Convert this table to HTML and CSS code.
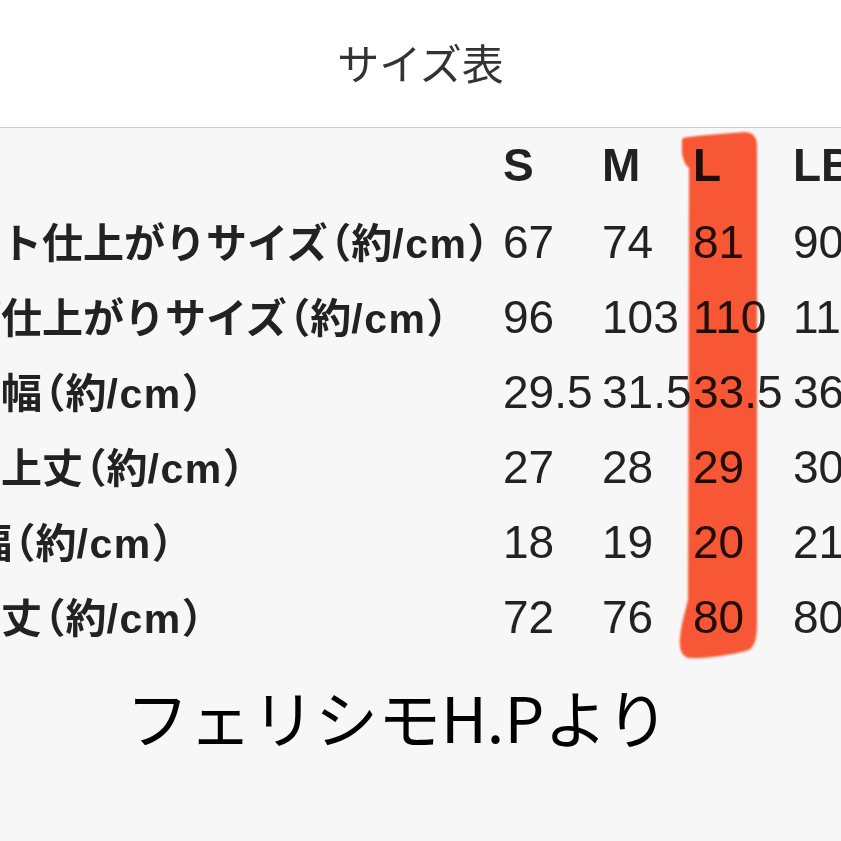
FILE: index.html
```html
<!DOCTYPE html>
<html lang="ja">
<head>
<meta charset="utf-8">
<title>サイズ表</title>
<link rel="stylesheet" href="styles.css">
</head>
<body>
<div class="page">
  <header class="top">
    <h1 class="title">サイズ表</h1>
  </header>
  <main class="sheet">
    <div class="size-table">
      <div class="cell head label"></div>
      <div class="cell head">S</div>
      <div class="cell head">M</div>
      <div class="cell head">L</div>
      <div class="cell head">LB</div>
      <div class="cell head">LL</div>

      <div class="cell label">ウエスト仕上がりサイズ<span class="po">（</span>約<span class="unit">/cm</span><span class="pc">）</span></div>
      <div class="cell">67</div><div class="cell">74</div><div class="cell">81</div><div class="cell">90</div><div class="cell">90</div>

      <div class="cell label">ヒップ仕上がりサイズ<span class="po">（</span>約<span class="unit">/cm</span><span class="pc">）</span></div>
      <div class="cell">96</div><div class="cell">103</div><div class="cell">110</div><div class="cell">119</div><div class="cell">119</div>

      <div class="cell label">わたり幅<span class="po">（</span>約<span class="unit">/cm</span><span class="pc">）</span></div>
      <div class="cell">29.5</div><div class="cell">31.5</div><div class="cell">33.5</div><div class="cell">36.5</div><div class="cell">36.5</div>

      <div class="cell label">後ろ股上丈<span class="po">（</span>約<span class="unit">/cm</span><span class="pc">）</span></div>
      <div class="cell">27</div><div class="cell">28</div><div class="cell">29</div><div class="cell">30</div><div class="cell">30</div>

      <div class="cell label"><span class="kana-wide">すそ</span>幅<span class="po">（</span>約<span class="unit">/cm</span><span class="pc">）</span></div>
      <div class="cell">18</div><div class="cell">19</div><div class="cell">20</div><div class="cell">21</div><div class="cell">21</div>

      <div class="cell label">前股下丈<span class="po">（</span>約<span class="unit">/cm</span><span class="pc">）</span></div>
      <div class="cell">72</div><div class="cell">76</div><div class="cell">80</div><div class="cell">80</div><div class="cell">80</div>
    </div>
    <p class="source">フェリシモH.Pより</p>
  </main>
  <svg class="marker" viewBox="0 0 841 841" width="841" height="841" aria-hidden="true">
    <path d="M 683 138 C 690 136, 720 134, 744 132 C 752 132, 757 136, 757 146 L 757 625 C 757 640, 754 649, 746 651 C 730 655, 705 659, 690 658 C 681 657, 679 648, 680 638 C 681 625, 685 612, 688 600 L 689 168 C 684 164, 681 155, 682 146 C 682 141, 682 139, 683 138 Z" fill="#ff5a36"/>
  </svg>
</div>
</body>
</html>
```

FILE: styles.css
```css
html, body {
  margin: 0;
  padding: 0;
  background: #f7f7f7;
}

body {
  width: 841px;
  height: 841px;
  overflow: hidden;
}

.page {
  position: relative;
  width: 841px;
  height: 841px;
  overflow: hidden;
}

.top {
  height: 127px;
  background: #ffffff;
  border-bottom: 1px solid #cfcfcf;
  display: flex;
  justify-content: center;
}

.title {
  margin: 0;
  padding-top: 41px;
  font-family: "Noto Sans CJK JP", sans-serif;
  font-weight: 400;
  font-size: 42px;
  line-height: 42px;
  color: #333333;
}

.sheet {
  display: flex;
  flex-direction: column;
}

.size-table {
  display: grid;
  grid-template-columns: 625px 99px 91px 100px 100px 100px;
  grid-auto-rows: 75px;
  align-items: baseline;
  margin-left: -122px;
  width: max-content;
  color: #222222;
}

.cell {
  font-family: "Liberation Sans", "Noto Sans CJK JP", sans-serif;
  font-size: 46px;
  line-height: 75px;
  white-space: nowrap;
}

.head {
  font-weight: 700;
}

.label {
  font-size: 41px;
  font-weight: 700;
}

.po,
.pc {
  font-family: "Noto Sans CJK JP", sans-serif;
  font-feature-settings: "halt";
}

.po {
  margin-left: 3px;
}

.pc {
  margin-right: 3px;
}

.unit {
  letter-spacing: 1.5px;
}

.kana-wide {
  letter-spacing: 5.5px;
}

.source {
  margin: 0;
  padding: 31px 0 0 126px;
  font-family: "Noto Sans CJK JP", sans-serif;
  font-weight: 400;
  font-size: 63px;
  line-height: 63px;
  color: #000000;
}

.marker {
  position: absolute;
  top: 0;
  left: 0;
  pointer-events: none;
  mix-blend-mode: multiply;
  filter: blur(0.8px);
}
```
